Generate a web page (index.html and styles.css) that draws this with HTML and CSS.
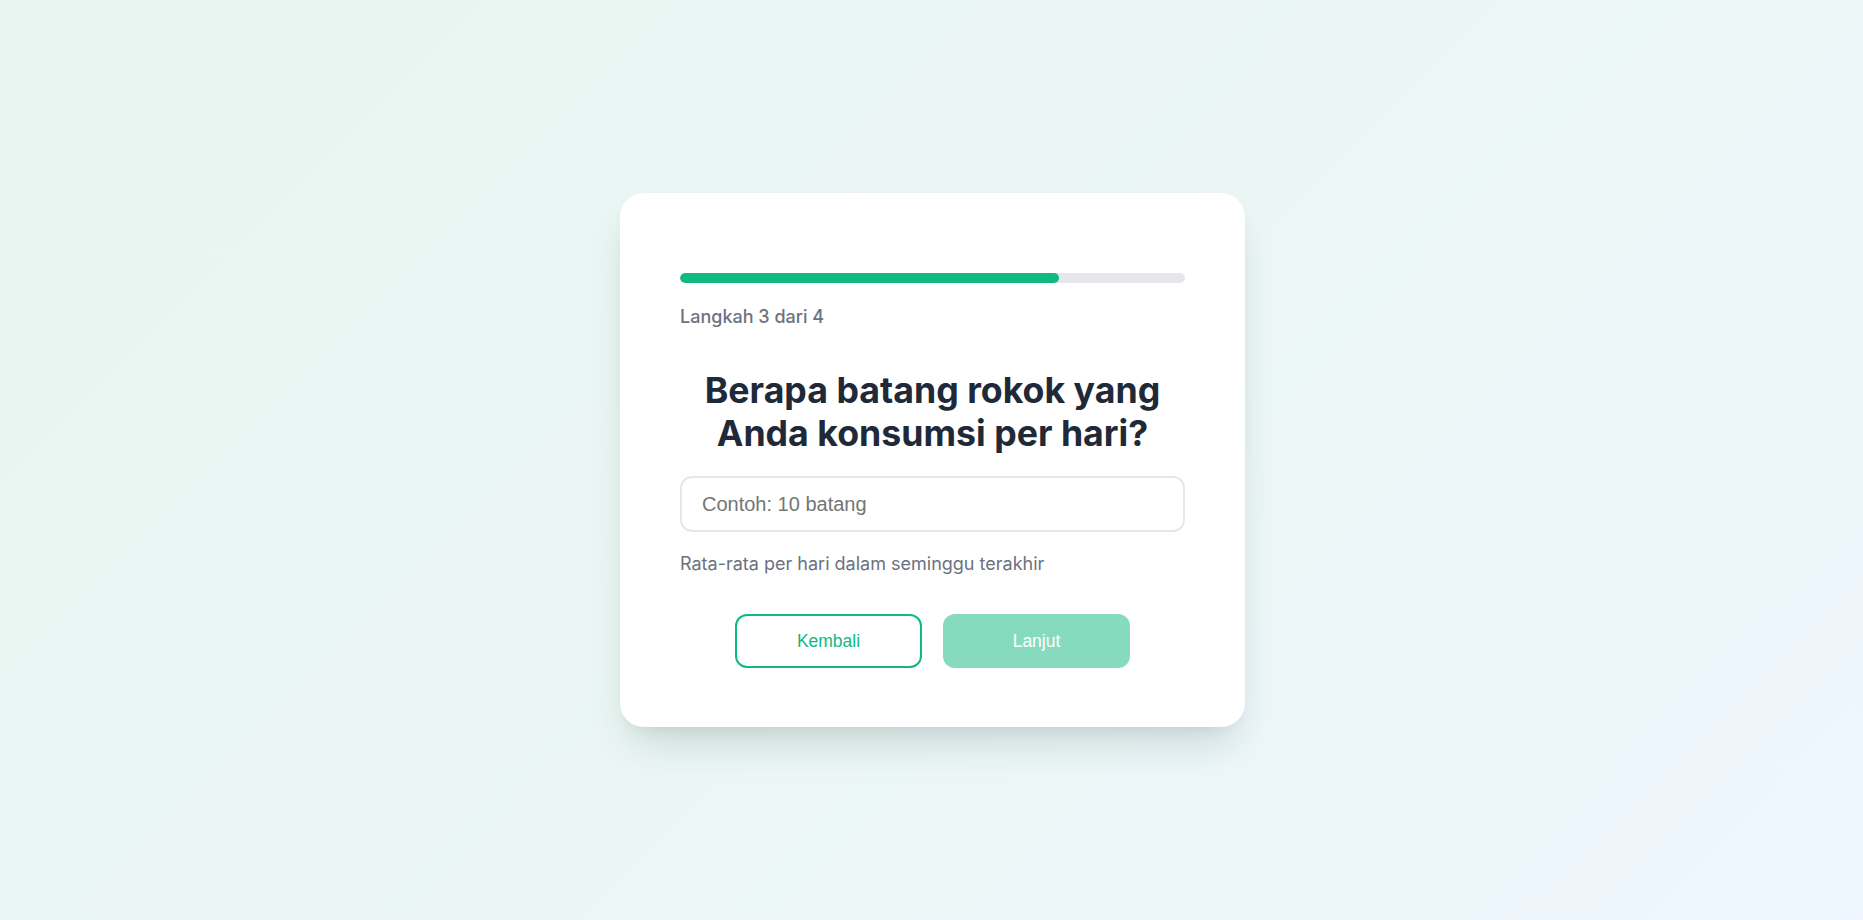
FILE: index.html
```html
<!DOCTYPE html>
<html lang="id">
<head>
  <meta charset="UTF-8">
  <meta name="viewport" content="width=device-width, initial-scale=1.0">
  <title>Kuesioner Rokok</title>
  <link rel="stylesheet" href="styles.css">
</head>
<body>
  <div class="card">
    <div class="progress">
      <div class="progress-fill" style="width: 75%"></div>
    </div>
    <div class="step">Langkah 3 dari 4</div>

    <h1 class="question">Berapa batang rokok yang Anda konsumsi per hari?</h1>

    <input class="answer" type="text" placeholder="Contoh: 10 batang">
    <div class="hint">Rata-rata per hari dalam seminggu terakhir</div>

    <div class="actions">
      <button class="btn btn-back">Kembali</button>
      <button class="btn btn-next" disabled>Lanjut</button>
    </div>
  </div>
</body>
</html>
```

FILE: styles.css
```css
* {
  box-sizing: border-box;
  margin: 0;
  padding: 0;
}

body {
  font-family: Inter, "Noto Sans", sans-serif;
  background: linear-gradient(135deg, #e7f5f0 0%, #ebf6f4 50%, #eff6ff 100%);
  display: flex;
  justify-content: center;
  align-items: center;
  height: 100vh;
}

.card {
  background: #fff;
  width: 625px;
  margin-left: 2px;
  border-radius: 24px;
  padding: 80px 60px 59px;
  box-shadow: 0 24px 40px -12px rgba(15, 60, 50, 0.18), 0 8px 16px -8px rgba(15, 60, 50, 0.08);
}

.progress {
  height: 9.6px;
  background: #e5e7eb;
  border-radius: 999px;
  overflow: hidden;
}

.progress-fill {
  height: 100%;
  background: #10b981;
  border-radius: 999px;
}

.step {
  margin-top: 20px;
  font-size: 18px;
  line-height: 27px;
  font-weight: 500;
  color: #6b7280;
}

.question {
  margin-top: 39px;
  font-size: 35.7px;
  line-height: 43.2px;
  font-weight: 700;
  color: #1f2937;
  text-align: center;
}

.answer {
  display: block;
  width: 100%;
  height: 56px;
  margin-top: 21px;
  padding: 0 20px;
  border: 2px solid #e5e7eb;
  border-radius: 12px;
  font-family: "Liberation Sans", Arial, sans-serif;
  font-size: 20px;
  color: #1f2937;
  outline: none;
}

.answer::placeholder {
  color: #757575;
}

.hint {
  margin-top: 18px;
  font-size: 18px;
  line-height: 27px;
  color: #6b7280;
}

.actions {
  display: flex;
  justify-content: center;
  gap: 21px;
  margin-top: 37px;
}

.btn {
  width: 187px;
  height: 54px;
  border-radius: 12px;
  font-family: "Liberation Sans", Arial, sans-serif;
  font-size: 17.5px;
  cursor: pointer;
}

.btn-back {
  background: #fff;
  border: 2px solid #10b981;
  color: #10b981;
}

.btn-next {
  background: #10b981;
  border: none;
  color: #fff;
  opacity: 0.5;
  cursor: not-allowed;
}
```
